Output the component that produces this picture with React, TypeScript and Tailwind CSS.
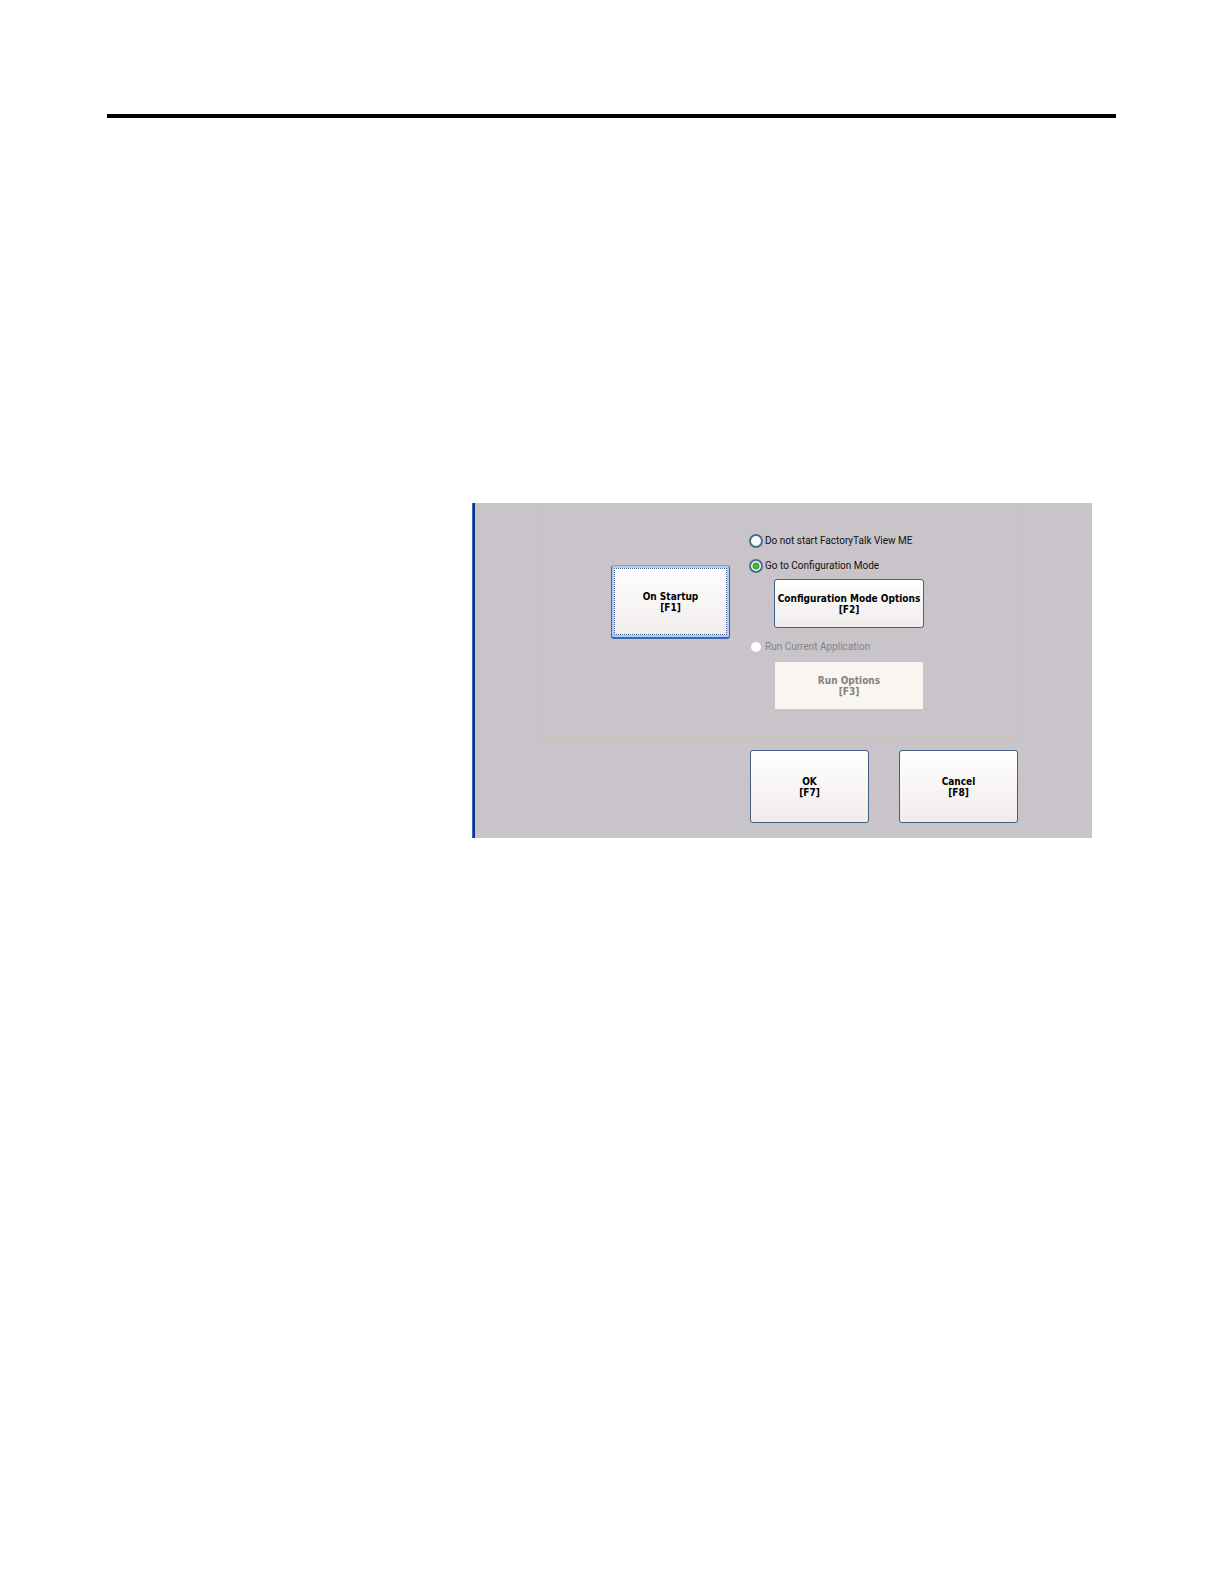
import type { ReactNode } from 'react'
import clsx from 'clsx'

type KeyButtonProps = {
  label: string
  hotkey: string
  className?: string
  disabled?: boolean
  children?: ReactNode
}

function KeyButton({ label, hotkey, className, disabled, children }: KeyButtonProps) {
  return (
    <button
      type="button"
      disabled={disabled}
      className={clsx(
        'flex flex-col items-center justify-center text-[10px] leading-[11px] font-bold whitespace-nowrap',
        disabled
          ? 'bg-[#f9f6f1] text-[#85827f]'
          : 'rounded-[3px] bg-linear-to-b from-white via-[#f8f6f4] to-[#f0ecec] text-black',
        className,
      )}
    >
      {children}
      <span>{label}</span>
      <span>[{hotkey}]</span>
    </button>
  )
}

type ModeRadioProps = {
  label: string
  value: string
  defaultChecked?: boolean
  disabled?: boolean
}

function ModeRadio({ label, value, defaultChecked, disabled }: ModeRadioProps) {
  return (
    <label
      className={clsx(
        "flex h-4 items-center gap-0.5 font-['Roboto',sans-serif] text-[10px] leading-4 whitespace-nowrap",
        disabled ? 'text-[#858287]' : 'text-[#111111]',
      )}
    >
      <input
        type="radio"
        name="startup-mode"
        value={value}
        defaultChecked={defaultChecked}
        disabled={disabled}
        className={clsx(
          'appearance-none rounded-full',
          disabled
            ? 'm-0.5 size-2.5 bg-white'
            : 'size-3.5 border-2 border-[#4a6d8c] bg-[#f4fafc] checked:bg-[radial-gradient(circle,#5cc24f_0px,#35a02f_3px,#f4fafc_4px)]',
        )}
      />
      {label}
    </label>
  )
}

export default function App() {
  return (
    <div className="min-h-screen bg-white pt-[114px] pr-[108px] pb-16 pl-[107px] font-['DejaVu_Sans_Condensed','Noto_Sans',sans-serif]">
      <hr className="h-1 border-0 bg-black" />

      <main className="mt-[385px] mr-6 ml-[365px] border-l border-[#2f6cc0] bg-[#c8c4c9]">
        <form className="border-l-2 border-[#10307c] pb-[15px]">
          {/* Startup mode group */}
          <div className="mr-[70px] ml-[66px] flex gap-[19px] border-x border-b border-x-[#c9c4c4] border-b-[#c8c2b9] pt-[30px] pb-[27px] pl-[69px]">
            <KeyButton
              label="On Startup"
              hotkey="F1"
              className="relative mt-8 h-[74px] w-[119px] border border-b-2 border-[#3a66b0] border-t-[#7e9fc9] inset-ring-2 inset-ring-[#b4cdec]"
            >
              {/* focus rectangle */}
              <span className="pointer-events-none absolute inset-0.5 border border-dotted border-[#3f5f96]" />
            </KeyButton>

            <div className="flex flex-col items-start">
              <ModeRadio label="Do not start FactoryTalk View ME" value="none" />
              <div className="mt-[9px]">
                <ModeRadio label="Go to Configuration Mode" value="config" defaultChecked />
              </div>
              <KeyButton
                label="Configuration Mode Options"
                hotkey="F2"
                className="mt-[5px] ml-[25px] h-[49px] w-[150px] border border-[#3a6391]"
              />
              <div className="mt-[11px]">
                <ModeRadio label="Run Current Application" value="run" disabled />
              </div>
              <KeyButton
                label="Run Options"
                hotkey="F3"
                disabled
                className="mt-[7px] ml-[26px] h-[47px] w-[148px]"
              />
            </div>
          </div>

          {/* Dialog actions */}
          <div className="mt-[13px] mr-[74px] flex justify-end gap-[30px]">
            <KeyButton label="OK" hotkey="F7" className="h-[73px] w-[119px] border border-[#3f6080]" />
            <KeyButton label="Cancel" hotkey="F8" className="h-[73px] w-[119px] border border-[#3f6080]" />
          </div>
        </form>
      </main>
    </div>
  )
}
